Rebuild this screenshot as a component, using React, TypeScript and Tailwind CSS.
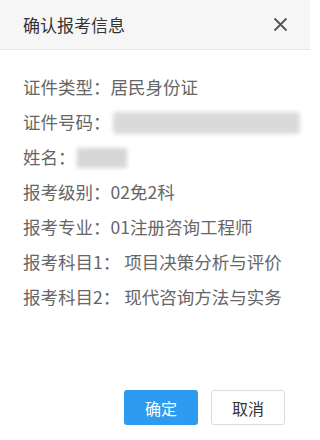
import React from 'react';

const font = { fontFamily: '"Noto Sans CJK SC", "Liberation Sans", sans-serif' };

const rows: { label: string; value?: string; blur?: 'id' | 'name' }[] = [
  { label: '证件类型：', value: '居民身份证' },
  { label: '证件号码：', blur: 'id' },
  { label: '姓名：', blur: 'name' },
  { label: '报考级别：', value: '02免2科' },
  { label: '报考专业：', value: '01注册咨询工程师' },
  { label: '报考科目1：', value: '\u00a0项目决策分析与评价' },
  { label: '报考科目2：', value: '\u00a0现代咨询方法与实务' },
];

const App = () => {
  return (
    <main className="w-[310px] h-[440px] bg-white flex flex-col overflow-hidden" style={font}>
      {/* Header */}
      <div className="h-[50px] bg-[#f6f6f6] border-b border-[#e6e6e6] flex items-center justify-between pl-[23px] pr-[22px] shrink-0">
        <h2 className="text-[17px] text-[#333] leading-none">确认报考信息</h2>
        <svg width="15" height="15" viewBox="0 0 15 15" className="text-[#555]">
          <path d="M1.5 1.5 L13.5 13.5 M13.5 1.5 L1.5 13.5" stroke="currentColor" strokeWidth="1.8" fill="none" />
        </svg>
      </div>

      {/* Body */}
      <div className="flex-grow flex flex-col pl-[23px] pt-[20px]">
        {rows.map((r) => (
          <div key={r.label} className="h-[35px] flex items-center text-[17.5px] text-[#666] whitespace-nowrap">
            <span>{r.label}</span>
            {r.value && <span>{r.value}</span>}
            {r.blur === 'id' && (
              <span className="ml-[2px] h-[22px] w-[187px] bg-[#dadada] blur-[2px] rounded-sm" />
            )}
            {r.blur === 'name' && (
              <span className="ml-[1px] h-[20px] w-[50px] bg-[#d6d6d6] blur-[2px]" />
            )}
          </div>
        ))}
      </div>

      {/* Footer */}
      <div className="flex justify-end gap-[13px] pr-[25px] pb-[15px]">
        <button className="w-[74px] h-[35px] rounded-[3px] bg-[#2d9cf0] text-white text-[16px]">确定</button>
        <button className="w-[74px] h-[35px] rounded-[3px] bg-white border border-[#dcdcdc] text-[#333] text-[16px]">取消</button>
      </div>
    </main>
  );
};

export default App;
